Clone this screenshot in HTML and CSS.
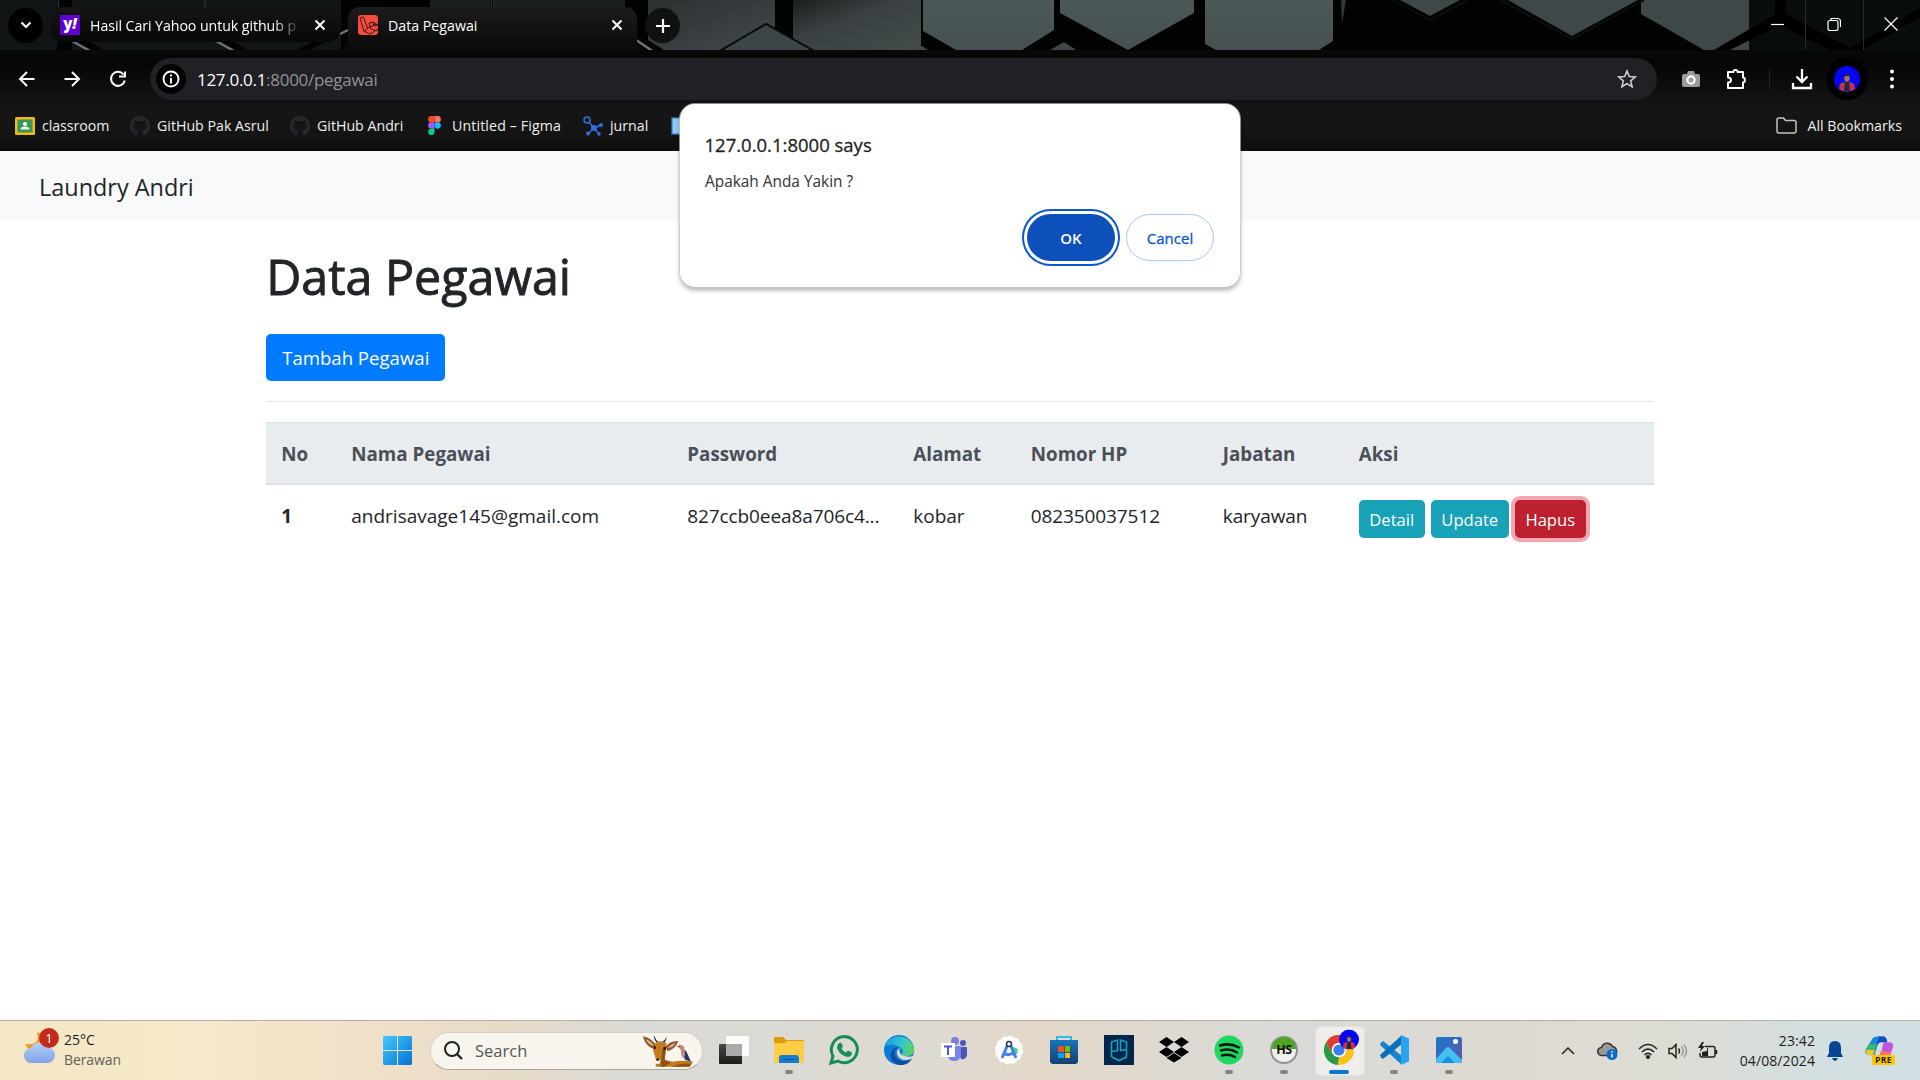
FILE: index.html
```html
<!DOCTYPE html>
<html lang="id">
<head>
<meta charset="utf-8">
<title>Data Pegawai</title>
<link rel="stylesheet" href="styles.css">
</head>
<body>
<div class="screen">

<header class="browser">
  <div class="tabstrip">
    <svg class="theme" viewBox="0 0 1920 50" aria-hidden="true">
      <defs>
        <linearGradient id="plateA" x1="0" y1="0" x2="1" y2="1"><stop offset="0" stop-color="#2b3031"/><stop offset="1" stop-color="#434a4b"/></linearGradient>
        <linearGradient id="plateB" x1="0" y1="0" x2="1" y2="1"><stop offset="0" stop-color="#1b1f1f"/><stop offset=".4" stop-color="#3a4041"/><stop offset="1" stop-color="#434b4b"/></linearGradient>
        <linearGradient id="plateC" x1="0" y1="0" x2="0" y2="1"><stop offset="0" stop-color="#4d5858"/><stop offset="1" stop-color="#465050"/></linearGradient>
      </defs>
      <rect width="1920" height="50" fill="#010202"/>
      <path fill="#111516" d="M0 0h57v50H0zM72 0h269v50H72z"/>
      <path fill="#1b1f20" d="M430 0h60v50h-60zM493 0h132v50H493z"/>
      <path stroke="#2b3031" stroke-width="1.500" d="M58.500 0v8M205 0v8M491.500 0v8"/>
      <path stroke="#6b7678" stroke-width="2.500" d="M72 41l18 10M216 41l18 10M636 40l18 12M340 34l8-4"/>
      <path stroke="#020303" stroke-width="6" d="M80 40l20 11M224 40l20 11M300 52l26-14"/>
      <path fill="url(#plateA)" d="M648 0h127v50H664l-16-10z"/>
      <path fill="url(#plateB)" d="M793 0h128v50H793z"/>
      <path fill="url(#plateC)" d="M923 0h131v30l-32 20h-66l-33-19z"/>
      <path fill="#3d4546" stroke="#0a0c0c" stroke-width="2" d="M718 52l48-28 50 28z"/>
      <path fill="url(#plateC)" d="M1060 0h134v13l-66 37-68-37zM1205 0h128v41l-14 9h-103l-11-6z"/>
      <path fill="#2f3737" d="M1341 0h5l-4 24z"/>
      <path fill="#3f4848" d="M1400 0h60l-30 16zM1508 0h130l-66 36zM1641 0h108v50h-45l-63-36zM1050 50l14-8 12 8zM914 50l8-4 6 4z"/>
      <path stroke="#0c0e0e" stroke-width="2" fill="none" d="M1392 0l38 20 38-20M1500 0l72 39 72-39"/>
      <path fill="#090d0c" d="M1749 0h171v50h-171z"/>
      <path fill="#000" d="M1775 0h11v14l68 36h-24l-50-25-50 25h-16l34-20 27-15zM1920 8v9l-58 33h-15z"/>
      <path stroke="#272b2b" d="M1805.500 0v50M1863.500 0v50"/>
    </svg>
    <button class="round search-tabs" aria-label="Search tabs"><svg width="12" height="12" viewBox="0 0 12 12"><path d="M1.500 3.500L6 8l4.500-4.500" stroke="#fff" stroke-width="2.200" fill="none"/></svg></button>
    <div class="tab back-tab">
      <span class="fav yahoo">y<i>!</i></span><span class="tab-title faded">Hasil Cari Yahoo untuk github p</span>
      <svg class="x" viewBox="0 0 12 12"><path d="M1.500 1.500l9 9M10.500 1.500l-9 9"/></svg>
    </div>
    <div class="tab front-tab">
      <svg class="fav" viewBox="0 0 20 20"><rect width="20" height="20" rx="3" fill="#f44b3f"/><path d="M2 3l3.500-1 4 11 9-4M2 3l4 13 6 3 8-5M6 16l4-3M11 8l2 6 6 2M11 8l4-1 5 3M15 7l1 4 4-1" fill="none" stroke="#2c1413" stroke-width=".9"/></svg>
      <span class="tab-title data-title">Data Pegawai</span>
      <svg class="x" viewBox="0 0 12 12"><path d="M1.500 1.500l9 9M10.500 1.500l-9 9"/></svg>
    </div>
    <button class="round new-tab" aria-label="New tab"><svg width="14" height="14" viewBox="0 0 14 14"><path d="M7 0v14M0 7h14" stroke="#fff" stroke-width="2.200"/></svg></button>
    <div class="window-controls">
      <svg viewBox="0 0 14 14"><path d="M1 7.500h13"/></svg>
      <svg viewBox="0 0 14 14"><path d="M1 5.500q0-2 2-2h6q2 0 2 2v6q0 2-2 2H3q-2 0-2-2zM4 3V1.500h6.500q3 0 3 3V10"/></svg>
      <svg viewBox="0 0 14 14"><path d="M.5.5l13 13M13.500.5l-13 13"/></svg>
    </div>
  </div>

  <div class="toolbar">
    <svg class="nav" viewBox="0 0 24 24"><path d="M19.500 12H5.500M12 5l-7 7 7 7"/></svg>
    <svg class="nav" viewBox="0 0 24 24"><path d="M4.500 12h14M12 5l7 7-7 7"/></svg>
    <svg class="nav" viewBox="0 0 24 24"><path d="M17.500 7.500A7 7 0 1 0 18.800 13.500M19 4.500V9.500h-6"/></svg>
    <div class="omnibox">
      <span class="site-info"><svg viewBox="0 0 20 20"><circle cx="10" cy="10" r="7.500"/><path d="M10 9v5.500M10 5.500v2"/></svg></span>
      <span class="url"><b>127.0.0.1</b>:8000/pegawai</span>
      <svg class="star" viewBox="0 0 20 20"><path d="M10 2l2.300 5.500 6 .5-4.600 3.900 1.400 5.900-5.100-3.200-5.100 3.200 1.400-5.900L1.700 8l6-.5z"/></svg>
    </div>
    <div class="extensions">
      <svg class="camera" viewBox="0 0 20 20"><path fill="#9b9b9b" d="M2 5h4l1-3h6l1 3h3q2 0 2 2v9q0 2-2 2H3q-2 0-2-2V7z"/><circle cx="10" cy="11" r="3.600" fill="#999" stroke="#fff" stroke-width="2.200"/></svg>
      <svg class="puzzle" viewBox="0 0 22 22"><path d="M3 4h5.500q-.2-2 2-2t2 2H18v5.500q2 .3 2 2.500t-2 2.500V20H3v-5.500q3 0 3-2.500T3 9.500z"/></svg>
      <span class="separator"></span>
      <svg class="download" viewBox="0 0 22 22"><path d="M11 1v12M5.500 8.500L11 14l5.500-5.500M2 15v5h18v-5"/></svg>
      <span class="profile"><svg viewBox="0 0 26 26"><use href="#person"/></svg></span>
      <svg class="kebab" viewBox="0 0 4 20"><circle cx="2" cy="2.500" r="2"/><circle cx="2" cy="10" r="2"/><circle cx="2" cy="17.500" r="2"/></svg>
    </div>
  </div>

  <nav class="bookmarks">
    <a class="bm bm-class"><svg width="20" height="18" viewBox="0 0 20 18"><rect width="20" height="18" rx="1.500" fill="#f4b918"/><rect x="2.500" y="2.500" width="15" height="13" fill="#39965a"/><circle cx="10" cy="7" r="2" fill="#fff"/><path d="M5.500 12.500q0-3 4.500-3t4.500 3z" fill="#e8f5ea"/></svg><span>classroom</span></a>
    <a class="bm bm-asrul"><svg width="20" height="20" viewBox="0 0 16 16"><use href="#octo"/></svg><span>GitHub Pak Asrul</span></a>
    <a class="bm bm-andri"><svg width="20" height="20" viewBox="0 0 16 16"><use href="#octo"/></svg><span>GitHub Andri</span></a>
    <a class="bm bm-figma"><svg width="13" height="19" viewBox="0 0 12 18"><path fill="#f24e1e" d="M6 0H3a3 3 0 0 0 0 6h3z"/><path fill="#ff7262" d="M6 0h3a3 3 0 0 1 0 6H6z"/><path fill="#a259ff" d="M6 6H3a3 3 0 0 0 0 6h3z"/><circle cx="9" cy="9" r="3" fill="#1abcfe"/><path fill="#0acf83" d="M6 12H3a3 3 0 1 0 3 3z"/></svg><span>Untitled – Figma</span></a>
    <a class="bm bm-jurnal"><svg width="20" height="20" viewBox="0 0 20 20"><g stroke="#2f6fd8" fill="none" stroke-width="1.500"><circle cx="4" cy="4" r="3"/><path d="M6 6l5 6 7-3M11 12l-6 6M11 12l5 6"/></g><g fill="#2f6fe4"><circle cx="11" cy="12" r="3"/><circle cx="18" cy="9" r="2"/><circle cx="5" cy="17.500" r="2"/><circle cx="16" cy="18" r="1.800"/></g></svg><span>jurnal</span></a>
    <a class="bm bm-cut"><svg width="18" height="18" viewBox="0 0 18 18"><rect x=".7" y=".7" width="17" height="16.600" fill="#8fcdf5" stroke="#205e94" stroke-width="1.400"/></svg></a>
    <a class="bm all-bookmarks"><svg width="21" height="17" viewBox="0 0 21 17"><path d="M1 3q0-2 2-2h4.500l2 2.500H18q2 0 2 2V14q0 2-2 2H3q-2 0-2-2z" fill="none" stroke="#c4c4c4" stroke-width="1.500"/></svg><span>All Bookmarks</span></a>
  </nav>
</header>

<main class="page">
  <div class="navbar"><span class="brand">Laundry Andri</span></div>
  <section class="container">
    <h1>Data Pegawai</h1>
    <button class="btn primary">Tambah Pegawai</button>
    <hr>
    <table>
      <colgroup><col class="c-no"><col class="c-name"><col class="c-pass"><col class="c-addr"><col class="c-phone"><col class="c-job"><col></colgroup>
      <thead><tr><th>No</th><th>Nama Pegawai</th><th>Password</th><th>Alamat</th><th>Nomor HP</th><th>Jabatan</th><th>Aksi</th></tr></thead>
      <tbody><tr>
        <th>1</th><td class="mail">andrisavage145@gmail.com</td><td class="hash">827ccb0eea8a706c4...</td><td>kobar</td><td class="phone">082350037512</td><td class="job">karyawan</td>
        <td class="actions"><div><button class="btn info w-detail">Detail</button><button class="btn info w-update">Update</button><button class="btn danger">Hapus</button></div></td>
      </tr></tbody>
    </table>
  </section>
</main>

<footer class="taskbar">
  <div class="weather">
    <span class="weather-icon">
      <svg viewBox="0 0 32 34"><defs><linearGradient id="cl" x1="0" y1="0" x2="0" y2="1"><stop offset="0" stop-color="#b9d2fb"/><stop offset="1" stop-color="#7ea2e8"/></linearGradient></defs><path fill="#f39a1f" d="M13 0q4 14-12 12q4 9 14 6t6-14z"/><path fill="url(#cl)" d="M8 31a7.500 7.500 0 0 1-1-15 9 9 0 0 1 16-1 8 8 0 0 1 0 16z"/></svg>
      <b class="badge">1</b>
    </span>
    <span class="weather-text"><span>25°C</span><span class="muted">Berawan</span></span>
  </div>
  <div class="dock">
    <svg class="start" viewBox="0 0 29 29"><defs><linearGradient id="win" x1="0" y1="0" x2="1" y2="1"><stop offset="0" stop-color="#43cbfb"/><stop offset="1" stop-color="#0671d5"/></linearGradient></defs><path fill="url(#win)" d="M1 0h13v14H0V1zM15 0h13l1 1v13H15zM0 15h14v14H1l-1-1zM15 15h14v13l-1 1H15z"/></svg>
    <div class="search">
      <svg width="19" height="19" viewBox="0 0 19 19"><circle cx="8" cy="8" r="7" fill="none" stroke="#222" stroke-width="2"/><path d="M13 13l5 5" stroke="#222" stroke-width="2.400"/></svg>
      <span>Search</span>
      <svg class="antelope" viewBox="0 0 52 34"><path fill="#8e592b" d="M1 2q8 1 13 9l-2 4q-9-3-11-13zM37 7q-8-1-13 6l2 4q8-2 11-10z"/><path fill="#e2bd93" d="M4 5q6 2 8 7-6-2-8-7zM34 9q-5 1-8 5 6-1 8-5z"/><path fill="#27336f" d="M12 1q0 6 5 9l1-1q-4-3-6-8zM25 2q0 6-4 8l-1-2q4-2 5-6z"/><path fill="#c27a1d" d="M13 9q6-4 12 0l-1 9-1 8q4 1 8 2 12-2 21 0l-3 5H14l0-8-3-10z"/><path fill="#8f5210" d="M21 14l4-2-1 6-1 8 6 3-6 4h-4zM30 33q10-4 20-3l-2 3z"/><path fill="#fff" d="M13 26h6l-1 4h-4z"/><path fill="#211815" d="M14 25h4l-1 2h-2zM12 12h2v3h-2zM22 13h2v3h-2z"/><path fill="#27336f" d="M39 14l6 3 5 11-6-2z"/><path fill="#c08b75" d="M37 13q3-4 6 0l1 7-1 5q-4-3-3-9z"/><path fill="#cb2f2f" d="M35 13l4-2v2z"/></svg>
    </div>
    <div class="apps">
      <span class="app"><svg viewBox="0 0 30 30"><defs><linearGradient id="dk" x1="0" y1="0" x2="0" y2="1"><stop offset="0" stop-color="#484848"/><stop offset="1" stop-color="#1c1c1c"/></linearGradient></defs><rect y="9" width="23" height="20" rx="1" fill="url(#dk)"/><rect x="7" y="1" width="23" height="20" rx="1" fill="#fff" opacity=".9"/><path fill="#aaa" d="M7 9h16v12H7z"/></svg></span>
      <span class="app open"><svg viewBox="0 0 30 30"><path fill="#dd9c09" d="M0 3q0-1 1-1h8l3 3h17q1 0 1 1v7H0z"/><path fill="#ffcd45" d="M0 8h11l2-2h17v21q0 1-1 1H1q-1 0-1-1z"/><path fill="#157ad2" d="M5 28v-5q0-3 3-3h14q3 0 3 3v5z"/><path stroke="#07539c" d="M9 24.500h12"/></svg></span>
      <span class="app"><svg viewBox="0 0 30 30"><path d="M2 28l2-7a13 13 0 1 1 5 5z" fill="none" stroke="#178c56" stroke-width="3"/><path fill="#178c56" d="M10 8l2-.5 2 4-1.500 2q1.500 3 4.500 4l2-2 4 2q0 4-4 4.500-8-1-11-9 0-3 2-5z"/></svg></span>
      <span class="app"><svg viewBox="0 0 30 30"><defs><linearGradient id="ed" x1="0" y1=".2" x2="1" y2=".4"><stop offset="0" stop-color="#159fe3"/><stop offset=".6" stop-color="#35c5cf"/><stop offset="1" stop-color="#60d45a"/></linearGradient></defs><circle cx="15" cy="15" r="15" fill="#0b7dd9"/><path fill="url(#ed)" d="M1 11A15 15 0 0 1 30 15q-1 6-7 6-5 0-5-2 2-3-1-6-8-6-16-2z"/><path fill="#104c9b" d="M15 12q-6 3-4 9 3 6 11 5 4-1 6-2-5 7-13 6Q5 27 7 18q2-6 8-6z"/><path fill="#dedbd3" d="M18 20q-4-3-2-7-4 2-3 6 2 6 9 6 5 0 8-4-6 2-12-1z"/></svg></span>
      <span class="app"><svg viewBox="0 0 30 30"><circle cx="16" cy="6" r="4" fill="#7980de"/><circle cx="24" cy="8" r="3" fill="#4d55bd"/><path fill="#4b53bc" d="M18 12h10v8q-1 5-6 4z"/><path fill="#7b83eb" d="M9 11h13v9q-1 6-7 6t-6-6z"/><rect x="2" y="8" width="14" height="14" fill="#fff"/><path d="M5 11.500h8M9 11.500V20" stroke="#5059c9" stroke-width="2"/></svg></span>
      <span class="app"><svg viewBox="0 0 30 30"><circle cx="15" cy="15" r="13.500" fill="#fff" stroke="#fff" stroke-width="1.500" stroke-dasharray="4 3"/><path fill="#3dd58b" d="M19 12l5 2-1 5-5 2z"/><path d="M14 9L8 23M16 9l6 14M9 18q6 4 11-1" fill="none" stroke="#447ff2" stroke-width="3"/><circle cx="15" cy="9" r="2.500" fill="#fff" stroke="#263845" stroke-width="1.500"/></svg></span>
      <span class="app"><svg viewBox="0 0 30 30"><defs><linearGradient id="st" x1="0" y1="0" x2="0" y2="1"><stop offset="0" stop-color="#1575bd"/><stop offset="1" stop-color="#17406f"/></linearGradient></defs><path d="M8 7V2h14v5" fill="none" stroke="#2dbbe9" stroke-width="2"/><path fill="url(#st)" d="M1 5h28v21q0 3-3 3H4q-3 0-3-3z"/><path fill="#f05022" d="M9 11h6v6H9z"/><path fill="#7fba00" d="M16 11h5v6h-5z"/><path fill="#08a4ee" d="M9 18h6v5H9z"/><path fill="#ffba08" d="M16 18h5v5h-5z"/></svg></span>
      <span class="app"><svg viewBox="0 0 30 30"><path fill="#02254a" d="M0 0h30v30H0z"/><path d="M7.500 22V7l6-2v10.500l-6 1M22.500 14.500l-6 1V5l6 2v15l-7.500 3.500-7-3.500" fill="none" stroke="#18a0c0" stroke-width="1.600"/></svg></span>
      <span class="app"><svg viewBox="0 0 30 30"><path d="M7.500 2L15 7l-7.500 5L0 7zM22.500 2L30 7l-7.500 5L15 7zM7.500 12l7.500 5-7.500 5L0 17zM22.500 12l7.500 5-7.500 5-7.500-5zM15 18l7.500 5-7.500 4.500L7.500 23z"/></svg></span>
      <span class="app open"><svg viewBox="0 0 30 30"><circle cx="15" cy="15" r="14.500" fill="#1fd761"/><path d="M6 10.500q10-3 19 2M7 15.500q9-2.500 16 2M8 20.500q7-2 13 1.500" fill="none" stroke="#07170c" stroke-width="2.500" stroke-linecap="round"/></svg></span>
      <span class="app open hs"><svg viewBox="0 0 30 30"><circle cx="15" cy="15" r="13" fill="#f0f0f0" stroke="#8b938d" stroke-width="2"/><path fill="#52a522" d="M3 14a12 12 0 0 1 24 0z"/></svg><b>HS</b></span>
      <span class="app active"><svg viewBox="0 0 30 30"><circle cx="15" cy="15" r="15" fill="#fbc116"/><path fill="#e33b2e" d="M2 7.500A15 15 0 0 1 28 7.500H15l-6.500 11z"/><path fill="#249a4a" d="M2 7.500l6.500 11.250L15 22l-1.500 8A15 15 0 0 1 2 7.500z"/><circle cx="15" cy="15" r="7.300" fill="#fff"/><circle cx="15" cy="15" r="5.600" fill="#3b7ded"/></svg><svg class="mini" viewBox="0 0 26 26"><use href="#person"/></svg></span>
      <span class="app open"><svg viewBox="0 0 30 30"><path fill="#1583ce" d="M2 7.500l2-1.500L23 21v9L1 10z"/><path fill="#0a70ba" d="M2 22.500l2 1.500L23 9V0L1 20z"/><path fill="#2aa4ee" d="M22 0l8 3.500v23L22 30z"/></svg></span>
      <span class="app open"><svg viewBox="0 0 30 30"><defs><linearGradient id="ph" x1="0" y1="0" x2="1" y2="1"><stop offset="0" stop-color="#1676cc"/><stop offset="1" stop-color="#6455a8"/></linearGradient></defs><rect x="2" y="2" width="26" height="26" rx="2" fill="url(#ph)"/><path fill="#43bff2" d="M2 24l10-11q2-2 4 0l12 12v1q0 2-2 2H4q-2 0-2-2z"/><path fill="#1590df" d="M7 28l7-7 7 7z"/><circle cx="21.500" cy="6.500" r="2.500" fill="#fff"/></svg></span>
    </div>
  </div>
  <div class="tray">
    <svg class="t-chev" viewBox="0 0 14 8"><path d="M1 7l6-6 6 6"/></svg>
    <svg class="t-cloud" viewBox="0 0 21 18"><path d="M5 13.500a4 4 0 0 1-.5-8 6 6 0 0 1 11-1 5 5 0 0 1 2 9z" fill="#999" stroke="#333" stroke-width="1.500"/><circle cx="15" cy="12.500" r="5.500" fill="#0b6cc9" stroke="none"/><path d="M15 12v3.500M15 9.200v1.500" stroke="#fff" stroke-width="1.500"/></svg>
    <svg class="t-wifi" viewBox="0 0 20 16"><path d="M1 6q9-9 18 0M4 9q6-6 12 0M6.500 12q3.500-3.500 7 0"/><circle cx="10" cy="14" r="1.300" fill="#222"/></svg>
    <svg class="t-sound" viewBox="0 0 20 16"><path d="M1 5.500h3l4-4v13l-4-4H1zM10.500 5.500q2 2.500 0 5"/><path stroke="#999" d="M13.500 3.500q3.500 4.500 0 9M16 1.500q5 6.500 0 13"/></svg>
    <svg class="t-batt" viewBox="0 0 20 17"><path d="M7 4.500h8q2 0 2 2V13q0 2-2 2H4q-2 0-2-2v-2M18.500 8v4"/><path fill="#222" stroke="none" d="M4 14V10l5-1V6h1v8zM4 0L0 6h3L2 10l5-6H4l2-4z"/></svg>
    <div class="clock"><span>23:42</span><span>04/08/2024</span></div>
    <svg class="t-bell" viewBox="0 0 16 20"><path fill="#0a4395" stroke="none" d="M8 0q6 0 6 7v5l2 4H0l2-4V7q0-7 6-7zM5 17h6q-1 3-3 3t-3-3z"/></svg>
    <div class="copilot"><svg viewBox="0 0 30 24"><path fill="#1687df" d="M8 2q1-2 4-2h7q3 0 4 5l-9 1-4 13H4q-5 0-3-6z"/><path fill="#40b868" d="M4 8h8l-3 11H4q-5 0-3-6z"/><path fill="#f2c230" d="M1 14h9l-2 6q-7 1-7-6z"/><path fill="#be55dc" d="M19 6h7q4 1 3 5l-4 12H13q3-1 4-6z"/><path fill="#ff6e76" d="M16 15l11 1-3 8H13q2-2 3-9z"/><path fill="#164bbd" d="M14 0h5q3 0 4 6h-6q-3 0-5 4z"/></svg><b>PRE</b></div>
  </div>
</footer>

<div class="dialog" role="alertdialog">
  <div class="dialog-title">127.0.0.1:8000 says</div>
  <div class="dialog-text">Apakah Anda Yakin ?</div>
  <div class="dialog-actions"><button class="ok">OK</button><button class="cancel">Cancel</button></div>
</div>

<svg class="symbols" aria-hidden="true">
  <symbol id="person" viewBox="0 0 26 26"><circle cx="13" cy="13" r="13" fill="#0505fa"/><path fill="#c63345" d="M5 23l1-5 4-2h6l4 2 1 5q-8 5-16 0z"/><path fill="#252936" d="M11 16h4l1 9h-6z"/><ellipse cx="13" cy="12" rx="2.700" ry="3.800" fill="#a47758"/><path fill="#292026" d="M10 11q0-3 3-3t3 3q-3-2-6 0z"/></symbol>
  <symbol id="octo" viewBox="0 0 16 16"><path fill="#24292e" d="M8 0C3.580 0 0 3.580 0 8c0 3.540 2.290 6.530 5.470 7.590.4.070.55-.17.55-.38 0-.19-.01-.82-.01-1.490-2.010.37-2.530-.49-2.690-.94-.09-.23-.48-.94-.82-1.130-.28-.15-.68-.52-.01-.53.63-.01 1.080.58 1.230.82.72 1.210 1.870.87 2.330.66.07-.52.28-.87.51-1.070-1.780-.2-3.640-.89-3.640-3.950 0-.87.31-1.590.82-2.150-.08-.2-.36-1.020.08-2.120 0 0 .67-.21 2.200.82a7.600 7.600 0 0 1 4 0c1.530-1.040 2.200-.82 2.200-.82.44 1.100.16 1.920.08 2.120.51.56.82 1.270.82 2.150 0 3.070-1.870 3.750-3.650 3.950.29.25.54.73.54 1.480 0 1.070-.01 1.930-.01 2.200 0 .21.150.46.55.38A8 8 0 0 0 16 8c0-4.420-3.580-8-8-8z"/></symbol>
</svg>
</div>
</body>
</html>
```

FILE: styles.css
```css
* { box-sizing: border-box; }
body { margin: 0; font-family: "Open Sans", "Noto Sans", sans-serif; color: #212529; background: #fff; }
button { font: inherit; border: 0; padding: 0; white-space: nowrap; }
.screen { position: relative; width: 1920px; height: 1080px; overflow: hidden; display: flex; flex-direction: column; }
.symbols { position: absolute; width: 0; height: 0; }
svg { flex: none; display: block; }

/* Browser window */
.browser { height: 151px; flex: none; background: linear-gradient(#090909 50px, #050505 62px, #161616 110px, #141414 135px, #0c0c0c); color: #fff; }
.tabstrip { position: relative; height: 50px; display: flex; align-items: flex-start; padding: 7px 0 0 8px; }
.tabstrip > * { position: relative; }
.tabstrip > .theme { position: absolute; left: 0; top: 0; width: 1920px; height: 50px; }
.round { width: 35px; height: 35px; border-radius: 50%; background: #111; display: grid; place-items: center; margin-top: 1px; }
.search-tabs { background: #000; margin-right: 7px; }
.search-tabs svg { margin-top: -1px; }
.tab { display: flex; align-items: center; height: 35px; padding: 0 15px 0 10px; border-radius: 14px; font-size: 14.200px; }
.back-tab { width: 291px; background: linear-gradient(#151515, #080808); margin-right: 7px; }
.front-tab { width: 289px; height: 43px; padding: 0 14px 8px 10px; border-radius: 12px 12px 0 0; background: linear-gradient(#1c1c1c, #0a0a0a); margin-right: 8px; }
.front-tab::before, .front-tab::after { content: ""; position: absolute; bottom: 0; width: 12px; height: 12px; }
.front-tab::before { left: -12px; background: radial-gradient(circle at 0 0, transparent 12px, #0a0a0a 12.500px); }
.front-tab::after { right: -12px; background: radial-gradient(circle at 100% 0, transparent 12px, #0a0a0a 12.500px); }
.fav { width: 20px; height: 20px; margin-right: 10px; flex: none; }
.yahoo { background: #6001d2; font-size: 15px; font-weight: 800; line-height: 17px; text-align: center; }
.tab-title { flex: 1; white-space: nowrap; overflow: hidden; padding-top: 1px; }
.faded { max-width: 211px; letter-spacing: -.07px; -webkit-mask-image: linear-gradient(90deg, #000 182px, transparent 212px); }
.x { width: 12px; height: 12px; margin-left: auto; stroke: #fff; stroke-width: 1.900; fill: none; }
.window-controls { display: flex; gap: 43px; margin: 10px 22px 0 auto; }
.window-controls svg { width: 14px; height: 14px; fill: none; stroke: #fff; stroke-width: 1.200; }

.toolbar { height: 58px; display: flex; align-items: center; padding-left: 15px; }
.nav { width: 24px; height: 24px; margin-right: 21px; fill: none; stroke: #fff; stroke-width: 2; }
.nav:nth-child(3) { margin: 0 20px 0 1px; }
.omnibox { width: 1507px; height: 42px; border-radius: 21px; background: #202124; display: flex; align-items: center; padding: 0 20px 0 6px; }
.site-info { width: 30px; height: 30px; border-radius: 50%; background: #000; display: grid; place-items: center; }
.site-info svg { width: 20px; fill: none; stroke: #fff; stroke-width: 1.900; }
.url { margin-left: 11px; font-size: 17px; color: #909397; letter-spacing: -.29px; }
.url b { color: #fff; font-weight: 400; }
.star { width: 20px; height: 20px; margin-left: auto; fill: none; stroke: #ccc; stroke-width: 1.600; }
.extensions { flex: 1; display: flex; align-items: center; padding-left: 24px; }
.camera { width: 20px; height: 20px; margin-right: 24px; }
.puzzle { width: 22px; height: 22px; margin-right: 22px; fill: none; stroke: #fff; stroke-width: 2; stroke-linejoin: round; }
.separator { width: 1px; height: 20px; background: #222; margin-right: 21px; }
.download { width: 22px; height: 22px; fill: none; stroke: #fff; stroke-width: 2.300; margin-right: 13px; }
.profile { width: 42px; height: 42px; background: #000; border-radius: 50%; display: grid; place-items: center; margin-right: 22px; }
.profile svg { width: 26px; height: 26px; }
.kebab { width: 4px; height: 20px; fill: #fff; }

.bookmarks { height: 35px; display: flex; align-items: center; padding: 0 18px 0 15px; font-size: 14.200px; color: #eee; }
.bm { display: flex; align-items: center; gap: 7px; white-space: nowrap; }
.bm span { margin-top: -1px; }
.bm-class { width: 115px; letter-spacing: -.05px; }
.bm-asrul { width: 160px; }
.bm-andri { width: 138px; }
.bm-figma { width: 155px; gap: 11px; letter-spacing: .12px; }
.bm-jurnal { width: 88px; }
.all-bookmarks { margin-left: auto; gap: 10px; }

/* Page */
.page { flex: 1; }
.navbar { height: 70px; background: #f8f9fa; padding: 2px 0 0 39px; display: flex; align-items: center; }
.brand { font-size: 23.450px; line-height: 38px; }
.container { width: 1387.500px; margin: 0 auto; }
h1 { margin: 0; padding: 25px 0 0; height: 113px; font-size: 48.400px; line-height: 60px; font-weight: 500; -webkit-text-stroke: .9px #212529; }
.btn { border-radius: 5px; color: #fff; }
.primary { display: block; width: 179px; height: 47px; background: #007bff; font-size: 18.600px; }
hr { border: 0; border-top: 1px solid #e5e5e5; margin: 20px 0; }
table { width: 100%; table-layout: fixed; border-collapse: separate; border-spacing: 0; font-size: 19px; line-height: 30px; }
th, td { text-align: left; padding: 15px; white-space: nowrap; vertical-align: top; }
thead th { height: 63px; padding-top: 16px; padding-bottom: 14px; font-size: 18.800px; background: #e9ecef; color: #495057; border-top: 1px solid #dee2e6; border-bottom: 2px solid #dee2e6; }
tbody th, tbody td { padding-top: 16px; }
.hash, .phone, .job { letter-spacing: -.1px; }
.c-no { width: 70px; } .c-name { width: 336px; } .c-pass { width: 226px; } .c-addr { width: 117.500px; } .c-phone { width: 192px; } .c-job { width: 136px; }
td.actions { padding-top: 15px; }
.actions div { display: flex; gap: 6px; }
.info, .danger { height: 38px; font-size: 16.600px; padding-top: 1px; }
.info { background: #17a2b8; }
.w-detail { width: 66px; } .w-update { width: 78px; }
.danger { width: 71px; background: #bd2130; box-shadow: 0 0 0 4px #f1a7b0; }

/* JavaScript confirm dialog */
.dialog { position: absolute; left: 680px; top: 104px; width: 560px; height: 183px; padding: 26px 26px 26px 25px; background: #fff; border-radius: 15px; box-shadow: 0 0 0 1px #c9c9c9aa, 0 3px 5px #0005; display: flex; flex-direction: column; }
.dialog-title { font-size: 18.500px; line-height: 30px; font-weight: 500; color: #1f1f1f; -webkit-text-stroke: .3px #1f1f1f; margin-left: -.5px; }
.dialog-text { font-size: 15.400px; line-height: 24px; margin-top: 10px; color: #333; }
.dialog-actions { display: flex; justify-content: flex-end; gap: 11px; margin-top: 20px; font-size: 15px; font-weight: 500; }
.dialog-actions button { width: 88px; height: 47px; border-radius: 24px; }
.ok { background: #0d50bb; color: #fff; font-weight: 600; box-shadow: 0 0 0 3px #fff, 0 0 0 5px #0b57d0; }
.cancel { background: #fff; border: 1px solid #a8c7fa; color: #0b57d0; -webkit-text-stroke: .3px #0b57d0; }

/* Taskbar */
.taskbar { height: 60px; flex: none; display: flex; border-top: 1px solid #b3afa8; background: linear-gradient(90deg, #f4e7c4, #f6e9cb 10%, #f0e0c8 19%, #e8dcc8 26%, #dadad7 33%, #dedad2 48%, #e3d8ca 54%, #d9dad8 67%, #dedad3 78%, #dddcd4 87%, #d3dfe1 95%, #d2dfe2); font-size: 14px; color: #1d1d1d; }
.weather { display: flex; width: 383px; padding: 6px 0 0 24px; }
.weather-icon { position: relative; width: 40px; }
.weather-icon svg { width: 32px; height: 34px; margin-top: 5px; }
.badge { position: absolute; left: 15px; top: 1px; width: 20px; height: 20px; border-radius: 50%; background: #c42b1c; color: #fff; text-align: center; font-size: 13px; line-height: 20px; font-weight: 400; }
.weather-text { display: flex; flex-direction: column; line-height: 20px; padding-top: 3px; }
.muted { color: #625f58; letter-spacing: -.1px; }
.dock { display: flex; align-items: center; width: 1094px; }
.start { width: 29px; height: 29px; margin: 0 18px 1px 0; }
.search { width: 273px; height: 38px; border-radius: 19px; background: #f8f5ef; border: 1px solid #d8d0c4; border-bottom-color: #aaa59d; display: flex; align-items: center; padding: 0 9px 0 13px; margin-right: 3px; font-size: 16.500px; color: #555; }
.search span { margin-left: 12px; }
.antelope { width: 51px; height: 34px; margin-left: auto; }
.apps { display: flex; align-items: center; }
.app { position: relative; width: 55px; height: 59px; display: grid; place-items: center; padding-bottom: 1px; }
.app svg { width: 30px; height: 30px; }
.app > * { position: relative; }
.open::after { content: ""; position: absolute; left: 24px; top: 49px; width: 8px; height: 4px; border-radius: 2px; background: #858380; }
.app.hs b { position: absolute; left: 0; top: 20px; width: 56px; text-align: center; font-size: 12.500px; line-height: 17px; letter-spacing: -.5px; color: #111; }
.active::before { content: ""; position: absolute; left: 4px; top: 5px; width: 48px; height: 48px; border-radius: 5px; background: #eeedeb; border: 1px solid #e3e1dd; }
.active::after { content: ""; position: absolute; left: 18px; top: 49px; width: 20px; height: 4px; border-radius: 2px; background: #0877d2; }
.app .mini { position: absolute; width: 20px; height: 21px; left: 28px; top: 8px; }
.tray { flex: 1; display: flex; align-items: center; padding-left: 84px; }
.tray svg { fill: none; stroke: #222; stroke-width: 1.500; }
.t-chev { width: 14px; height: 8px; margin-right: 22px; }
.t-cloud { width: 21px; height: 18px; margin-right: 20px; }
.t-wifi { width: 20px; height: 16px; margin-right: 10px; }
.t-sound { width: 20px; height: 16px; margin-right: 10px; }
.t-batt { width: 20px; height: 17px; }
.clock { width: 97px; text-align: right; line-height: 20px; display: flex; flex-direction: column; letter-spacing: .1px; }
.t-bell { width: 16px; height: 20px; margin-left: 12px; }
.copilot { position: relative; width: 30px; height: 29px; margin-left: 22px; }
.copilot svg { width: 29px; height: 24px; stroke: none; }
.copilot b { position: absolute; left: 7px; top: 19px; width: 23px; height: 10px; border-radius: 2px; background: #ffc600; font-size: 8.500px; line-height: 10px; text-align: center; letter-spacing: .5px; }
```
